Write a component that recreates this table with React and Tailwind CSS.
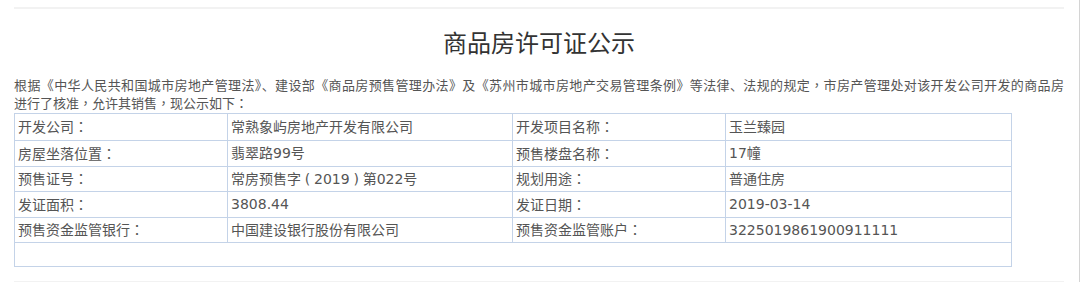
import React from "react";

const TC = { fontFamily: '"Noto Sans CJK TC", sans-serif' };

function P({ c }) {
  return <span style={TC}>{c}</span>;
}

function Label({ t }) {
  return (
    <>
      {t}
      <P c="：" />
    </>
  );
}

const rows = [
  [<Label t="开发公司" />, "常熟象屿房地产开发有限公司", <Label t="开发项目名称" />, "玉兰臻园", "h-[27px]"],
  [<Label t="房屋坐落位置" />, "翡翠路99号", <Label t="预售楼盘名称" />, "17幢", "h-[26px]"],
  [
    <Label t="预售证号" />,
    <>
      常房预售字
      <span className="inline-block w-[13px] text-center">(</span>
      2019
      <span className="inline-block w-[13px] text-center">)</span>
      第022号
    </>,
    <Label t="规划用途" />,
    "普通住房",
    "h-[25px]",
  ],
  [<Label t="发证面积" />, "3808.44", <Label t="发证日期" />, "2019-03-14", "h-[26px]"],
  [<Label t="预售资金监管银行" />, "中国建设银行股份有限公司", <Label t="预售资金监管账户" />, "3225019861900911111", "h-[25px]"],
];

export default function App() {
  return (
    <div
      className="w-[1080px] h-[282px] bg-white border-r border-[#d4d4d4] overflow-hidden text-[#555]"
      style={{ fontFamily: '"DejaVu Sans", "Noto Sans CJK SC", sans-serif' }}
    >
      <div className="ml-[14px] w-[1050px] pt-[7px] flex flex-col">
        <div className="h-[2px] bg-[#f2f2f2]" />
        <h1
          className="mt-[17px] h-[32px] leading-[32px] text-[24px] text-center text-[#333] font-normal"
          style={{ fontFamily: '"Noto Sans CJK SC", sans-serif' }}
        >
          商品房许可证公示
        </h1>
        <div
          className="mt-[18px] w-[1050px] text-[13px] leading-[18px]"
          style={{ fontFamily: '"Noto Sans CJK SC", sans-serif' }}
        >
          <div className="text-justify [text-align-last:justify] whitespace-nowrap">
            根据《中华人民共和国城市房地产管理法》、建设部《商品房预售管理办法》及《苏州市城市房地产交易管理条例》等法律、法规的规定
            <P c="，" />
            市房产管理处对该开发公司开发的商品房
          </div>
          <div>
            进行了核准
            <P c="，" />
            允许其销售
            <P c="，" />
            现公示如下
            <P c="：" />
          </div>
        </div>
        <div className="mt-px w-[998px] grid grid-cols-[213px_285px_213px_286px] border-l border-t border-[#c4d3e8] text-[14px]">
          {rows.map((r, i) => (
            <React.Fragment key={i}>
              {r.slice(0, 4).map((c, j) => (
                <div
                  key={j}
                  className={`${r[4]} flex items-center pl-[3px] border-r border-b border-[#c4d3e8] whitespace-nowrap`}
                >
                  <span>{c}</span>
                </div>
              ))}
            </React.Fragment>
          ))}
          <div className="col-span-4 h-[24px] border-r border-b border-[#c4d3e8]" />
        </div>
        <div className="mt-[14px] h-[2px] bg-[#f2f2f2]" />
      </div>
    </div>
  );
}
